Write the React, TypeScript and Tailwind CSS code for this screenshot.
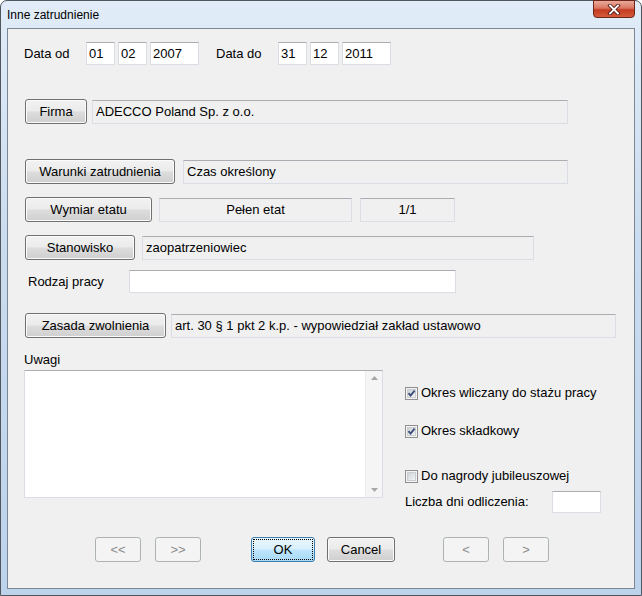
import type { ReactNode } from 'react';

const btnFace =
  'border border-[#707070] rounded-[3px] bg-[linear-gradient(#f2f2f2,#ebebeb_48%,#dddddd_52%,#cfcfcf)] shadow-[inset_0_0_0_1px_#fbfbfb]';
const disabledFace = 'border border-[#adb2b5] rounded-[3px] bg-[#f4f4f4] text-[#8b8b8b]';
const boxBorder = 'border border-[#dadde3] border-t-[#abadb3]';

function Btn({ children, className = '' }: { children: ReactNode; className?: string }) {
  return (
    <button type="button" className={`h-[25px] flex items-center justify-center ${btnFace} ${className}`}>
      {children}
    </button>
  );
}

function Field({
  children,
  className = '',
  white = false,
  center = false,
}: {
  children?: ReactNode;
  className?: string;
  white?: boolean;
  center?: boolean;
}) {
  return (
    <div
      className={`flex items-center ${boxBorder} ${white ? 'bg-white' : 'bg-[#f0f0f0]'} ${
        center ? 'justify-center' : 'pl-[3px]'
      } ${className}`}
    >
      {children}
    </div>
  );
}

function Check({ checked }: { checked: boolean }) {
  return (
    <svg width="13" height="13" viewBox="0 0 13 13" className="shrink-0">
      <defs>
        <linearGradient id={checked ? 'cbg1' : 'cbg0'} x1="0" y1="0" x2="1" y2="1">
          <stop offset="0" stopColor="#cbcfd5" />
          <stop offset="1" stopColor="#f7f7f7" />
        </linearGradient>
      </defs>
      <rect x="0.5" y="0.5" width="12" height="12" fill="#f4f4f4" stroke="#8e8f8f" />
      <rect x="2.5" y="2.5" width="8" height="8" fill={`url(#${checked ? 'cbg1' : 'cbg0'})`} stroke="#c9ccd1" />
      {checked && <path d="M3.5 6.2 L5.6 8.6 L9.6 3.6" fill="none" stroke="#3b4d7a" strokeWidth="1.9" />}
    </svg>
  );
}

function CheckRow({ checked, label, className = '' }: { checked: boolean; label: string; className?: string }) {
  return (
    <div className={`h-4 flex items-center pl-px ${className}`}>
      <Check checked={checked} />
      <span className="ml-[3px]">{label}</span>
    </div>
  );
}

export default function App() {
  return (
    <div className="w-[642px] h-[596px] bg-white font-['Liberation_Sans',Arial,sans-serif] text-[13px] leading-4 text-black">
      <div className="w-full h-full flex flex-col rounded-t-[7px] border border-[#50565e] bg-[linear-gradient(#e1ecf8,#cadcef_40%,#bdd3ec)] px-[6px] pb-[6px]">
        {/* Title bar */}
        <div className="h-[27px] flex items-start">
          <span className="mt-[7px] text-[12px] leading-[14px] text-black">Inne zatrudnienie</span>
          <div className="ml-auto -mt-px w-[42px] h-[18px] rounded-b-[4px] border border-[#6b2418] bg-[linear-gradient(#eaaa9c,#d9755f_45%,#c33b22_55%,#d65a3b)] flex items-center justify-center">
            <svg width="14" height="11" viewBox="0 0 14 11">
              <path d="M3 1.5 L11 9.5 M11 1.5 L3 9.5" stroke="#4a1610" strokeWidth="3.6" strokeLinecap="square" />
              <path d="M3 1.5 L11 9.5 M11 1.5 L3 9.5" stroke="#ffffff" strokeWidth="1.9" strokeLinecap="square" />
            </svg>
          </div>
        </div>

        {/* Client area */}
        <div className="flex-1 border border-[#7c8796] bg-[#f0f0f0] pl-[16px] flex flex-col">
          {/* Dates */}
          <div className="mt-[13px] h-[23px] flex items-center">
            <span className="w-[62px]">Data od</span>
            <Field white className="w-[29px] h-[23px] !pl-[2px]">01</Field>
            <Field white className="ml-[3px] w-[29px] h-[23px] !pl-[2px]">02</Field>
            <Field white className="ml-[3px] w-[49px] h-[23px] !pl-[2px]">2007</Field>
            <span className="ml-[17px] w-[62px]">Data do</span>
            <Field white className="w-[29px] h-[23px] !pl-[2px]">31</Field>
            <Field white className="ml-[3px] w-[29px] h-[23px] !pl-[2px]">12</Field>
            <Field white className="ml-[3px] w-[49px] h-[23px] !pl-[2px]">2011</Field>
          </div>

          {/* Firma */}
          <div className="mt-[34px] h-[25px] flex items-center">
            <Btn className="ml-px w-[62px]">Firma</Btn>
            <Field className="ml-[5px] w-[476px] h-[24px]">ADECCO Poland Sp. z o.o.</Field>
          </div>

          {/* Warunki zatrudnienia */}
          <div className="mt-[35px] h-[25px] flex items-center">
            <Btn className="ml-px w-[150px]">Warunki zatrudnienia</Btn>
            <Field className="ml-[8px] w-[385px] h-[24px]">Czas określony</Field>
          </div>

          {/* Wymiar etatu */}
          <div className="mt-[13px] h-[25px] flex items-center">
            <Btn className="ml-px w-[127px]">Wymiar etatu</Btn>
            <Field center className="ml-[7px] w-[193px] h-[24px]">Pełen etat</Field>
            <Field center className="ml-[8px] w-[95px] h-[24px]">1/1</Field>
          </div>

          {/* Stanowisko */}
          <div className="mt-[13px] h-[25px] flex items-center">
            <Btn className="ml-px w-[110px]">Stanowisko</Btn>
            <Field className="ml-[7px] w-[392px] h-[24px]">zaopatrzeniowiec</Field>
          </div>

          {/* Rodzaj pracy */}
          <div className="mt-[10px] h-[23px] flex items-center">
            <span className="w-[105px] pl-[4px]">Rodzaj pracy</span>
            <Field white className="w-[327px] h-[23px]" />
          </div>

          {/* Zasada zwolnienia */}
          <div className="mt-[20px] h-[25px] flex items-center">
            <Btn className="ml-px w-[141px]">Zasada zwolnienia</Btn>
            <Field className="ml-[5px] w-[445px] h-[24px]">art. 30 § 1 pkt 2 k.p. - wypowiedział zakład ustawowo</Field>
          </div>

          {/* Uwagi + options */}
          <div className="mt-[14px] flex items-start">
            <div className="w-[359px] flex flex-col">
              <span className="h-4">Uwagi</span>
              <div className={`mt-[2px] h-[128px] flex bg-white ${boxBorder}`}>
                <div className="flex-1" />
                <div className="w-[17px] bg-[#f5f5f5] border-l border-[#ececec] flex flex-col items-center justify-between py-[5px]">
                  <svg width="7" height="4" viewBox="0 0 7 4">
                    <path d="M0 4 L3.5 0 L7 4 Z" fill="#a7a7a7" />
                  </svg>
                  <svg width="7" height="4" viewBox="0 0 7 4">
                    <path d="M0 0 L7 0 L3.5 4 Z" fill="#a7a7a7" />
                  </svg>
                </div>
              </div>
            </div>

            <div className="ml-[21px] flex flex-col">
              <CheckRow checked className="mt-[33px]" label="Okres wliczany do stażu pracy" />
              <CheckRow checked className="mt-[22px]" label="Okres składkowy" />
              <CheckRow checked={false} className="mt-[29px]" label="Do nagrody jubileuszowej" />
              <div className="mt-[7px] h-[22px] flex items-center">
                <span className="w-[148px] pl-px">Liczba dni odliczenia:</span>
                <Field white className="w-[49px] h-[22px]" />
              </div>
            </div>
          </div>

          {/* Bottom buttons */}
          <div className="mt-[24px] h-[25px] flex items-center">
            <button type="button" className={`ml-[71px] w-[46px] h-[25px] ${disabledFace}`}>&lt;&lt;</button>
            <button type="button" className={`ml-[14px] w-[46px] h-[25px] ${disabledFace}`}>&gt;&gt;</button>
            <button
              type="button"
              className="ml-[50px] w-[64px] h-[25px] rounded-[3px] border border-[#3c7fb1] bg-[linear-gradient(#eaf6fd,#d9f0fc_48%,#bee6fd_52%,#a7d9f5)] outline-1 outline-dotted outline-black -outline-offset-[3px]"
            >
              OK
            </button>
            <Btn className="ml-[12px] w-[68px]">Cancel</Btn>
            <button type="button" className={`ml-[48px] w-[46px] h-[25px] ${disabledFace}`}>&lt;</button>
            <button type="button" className={`ml-[14px] w-[46px] h-[25px] ${disabledFace}`}>&gt;</button>
          </div>
        </div>
      </div>
    </div>
  );
}
